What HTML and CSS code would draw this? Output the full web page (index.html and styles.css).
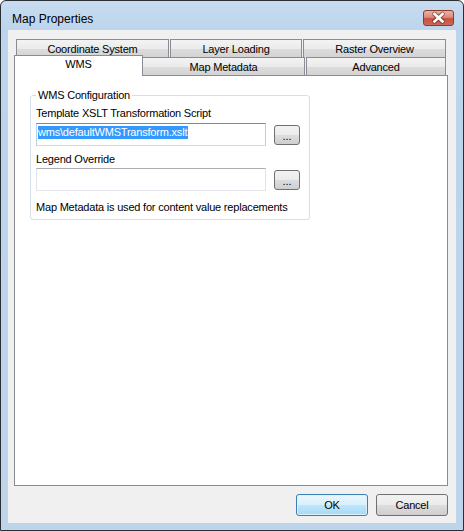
FILE: index.html
```html
<!DOCTYPE html>
<html>
<head>
<meta charset="utf-8">
<title>Map Properties</title>
<link rel="stylesheet" href="styles.css">
</head>
<body>
<div class="window">
  <div class="titlebar">
    <span class="title">Map Properties</span>
    <div class="close">
      <svg width="29" height="14" viewBox="0 0 29 14">
        <path d="M10.5 3 L18.5 10.5 M18.5 3 L10.5 10.5" stroke="#5a2219" stroke-opacity="0.55" stroke-width="4.6" stroke-linecap="round" fill="none"/>
        <path d="M10.5 3 L18.5 10.5 M18.5 3 L10.5 10.5" stroke="#ffffff" stroke-width="2.6" stroke-linecap="square" fill="none"/>
      </svg>
    </div>
  </div>
  <div class="client">
    <div class="tabcontrol">
      <div class="tabrow back">
        <div class="tab t-cs">Coordinate System</div>
        <div class="tab t-ll">Layer Loading</div>
        <div class="tab t-ro">Raster Overview</div>
      </div>
      <div class="tabrow front">
        <div class="tab t-wms selected">WMS</div>
        <div class="tab t-mm">Map Metadata</div>
        <div class="tab t-adv">Advanced</div>
      </div>
      <div class="page">
        <div class="group">
          <span class="legend">WMS Configuration</span>
          <div class="label first">Template XSLT Transformation Script</div>
          <div class="field-row">
            <div class="textbox focused"><span class="sel">wms\defaultWMSTransform.xslt</span></div>
            <div class="btn browse">...</div>
          </div>
          <div class="label second">Legend Override</div>
          <div class="field-row second-row">
            <div class="textbox"></div>
            <div class="btn browse">...</div>
          </div>
          <div class="label note">Map Metadata is used for content value replacements</div>
        </div>
      </div>
    </div>
    <div class="actions">
      <div class="btn dialog default">OK</div>
      <div class="btn dialog">Cancel</div>
    </div>
  </div>
</div>
</body>
</html>
```

FILE: styles.css
```css
* { box-sizing: border-box; }

html, body {
  margin: 0;
  padding: 0;
  background: #ffffff;
}

body {
  font-family: "Liberation Sans", Arial, sans-serif;
  font-size: 11px;
  letter-spacing: -0.2px;
  color: #000000;
}

.window {
  width: 464px;
  height: 531px;
  border: 1px solid #2a2f36;
  border-radius: 6px 6px 0 0;
  padding: 0 7px 7px 7px;
  background: linear-gradient(to bottom, #c8dcf0 0px, #bcd4ec 30px, #bed4ea 100%);
  display: flex;
  flex-direction: column;
}

.titlebar {
  height: 29px;
  display: flex;
  align-items: flex-start;
}

.title {
  padding-left: 4px;
  padding-top: 11px;
  font-size: 12px;
  line-height: 14px;
  letter-spacing: 0;
  color: #000000;
}

.close {
  margin-left: auto;
  margin-top: 9px;
  margin-right: 2px;
  width: 31px;
  height: 16px;
  border: 1px solid #8a3b2f;
  border-radius: 3px;
  background: linear-gradient(to bottom, #eab1a4 0%, #dd8a7b 45%, #c9503f 55%, #cc6a57 100%);
  display: flex;
  align-items: center;
  justify-content: center;
}

.close svg { display: block; }

.client {
  height: 493px;
  background: #f0f0f0;
  padding: 9px 8px 0 6px;
  display: flex;
  flex-direction: column;
}

.tabcontrol {
  width: 434px;
  display: flex;
  flex-direction: column;
}

.tabrow {
  display: flex;
  gap: 1px;
  padding: 0 2px;
  height: 18px;
  align-items: flex-start;
}

.tab {
  height: 18px;
  border: 1px solid #898c95;
  background: linear-gradient(to bottom, #f3f3f3 0%, #ebebeb 50%, #dddddd 51%, #d3d3d3 100%);
  text-align: center;
  line-height: 13px;
  padding-top: 3px;
  white-space: nowrap;
}

.back .tab { border-bottom: none; }
.front .tab { border-bottom: none; }

.t-cs { width: 153px; }
.t-ll { width: 132px; }
.t-ro { width: 143px; }
.t-wms { width: 125px; }
.t-mm { width: 163px; }
.t-adv { width: 140px; }

.tab.selected {
  position: relative;
  z-index: 2;
  width: 129px;
  height: 21px;
  margin: -2px -2px 0 -2px;
  background: #ffffff;
  padding-top: 2px;
}

.page {
  height: 411px;
  border: 1px solid #898c95;
  background: #ffffff;
  padding: 19px 0 0 15px;
}

.group {
  position: relative;
  width: 280px;
  height: 125px;
  border: 1px solid #d5dfe5;
  border-radius: 3px;
  padding: 0 0 0 5px;
}

.legend {
  position: absolute;
  top: -7px;
  left: 5px;
  padding: 0 2px;
  background: #ffffff;
  line-height: 13px;
}

.label {
  line-height: 13px;
  white-space: nowrap;
}

.label.first { margin-top: 11px; }
.label.second { margin-top: 7px; }
.label.note { margin-top: 10px; }

.field-row {
  display: flex;
  align-items: center;
  margin-top: 3px;
}

.field-row.second-row { margin-top: 2px; }

.textbox {
  width: 230px;
  height: 23px;
  border: 1px solid;
  border-color: #abadb3 #e2e3ea #e3e9ef #e2e3ea;
  background: #ffffff;
  padding: 2px 1px 0 1px;
}

.textbox.focused {
  border-color: #5c93bc #b5cfe7 #c7dcef #b5cfe7;
}

.sel {
  display: inline-block;
  background: #3399ff;
  color: #ffffff;
  line-height: 13px;
  height: 13px;
  padding-right: 1px;
}

.btn {
  border: 1px solid #707070;
  border-radius: 3px;
  background: linear-gradient(to bottom, #f2f2f2 0%, #ebebeb 50%, #dddddd 51%, #cfcfcf 100%);
  text-align: center;
  color: #000000;
}

.browse {
  width: 26px;
  height: 20px;
  margin-left: 8px;
  line-height: 13px;
  padding-top: 4px;
  letter-spacing: 0;
}

.actions {
  display: flex;
  justify-content: flex-end;
  gap: 8px;
  margin-top: 8px;
}

.dialog {
  width: 72px;
  height: 22px;
  line-height: 13px;
  padding-top: 4px;
}

.dialog.default {
  border-color: #3c7fb1;
  background: linear-gradient(to bottom, #eaf6fd 0%, #d9f0fc 50%, #bee6fd 51%, #a7d9f5 100%);
  box-shadow: inset 0 0 0 1px #dff2fc;
}
```
